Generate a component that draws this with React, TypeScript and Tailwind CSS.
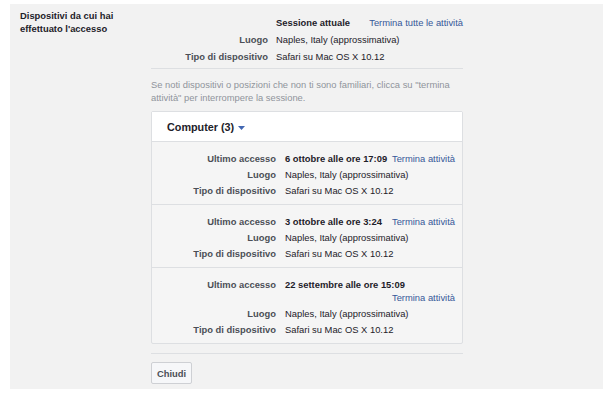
import React from "react";

type Session = {
  date: string;
  place: string;
  device: string;
};

const sessions: Session[] = [
  { date: "6 ottobre alle ore 17:09", place: "Naples, Italy (approssimativa)", device: "Safari su Mac OS X 10.12" },
  { date: "3 ottobre alle ore 3:24", place: "Naples, Italy (approssimativa)", device: "Safari su Mac OS X 10.12" },
  { date: "22 settembre alle ore 15:09", place: "Naples, Italy (approssimativa)", device: "Safari su Mac OS X 10.12" },
];

function Label({ children }: { children: React.ReactNode }) {
  return <div className="text-right font-bold text-[#4b4f56] py-[1.5px]">{children}</div>;
}

function Value({ children }: { children: React.ReactNode }) {
  return <div className="text-[#1d2129] py-[1.5px]">{children}</div>;
}

function App() {
  return (
    <div className="w-[610px] h-[395px] bg-white pt-[4px] pl-[10px] font-['Liberation_Sans',Arial,sans-serif] text-[9.4px] leading-[13px]">
      <div className="flex w-[593px] h-[385px] bg-[#f2f2f2]">
        {/* left title */}
        <div className="w-[141px] pl-[10px] pt-[6px] pr-[10px]">
          <div className="font-bold text-[#1d2129] leading-[12.5px]">
            Dispositivi da cui hai effettuato l'accesso
          </div>
        </div>

        <div className="w-[312px] flex flex-col">
          {/* current session */}
          <div className="grid grid-cols-[117px_1fr] gap-x-2 pt-[10px] pb-[3px] border-b border-[#dddfe2]">
            <div />
            <div className="flex justify-between py-[2px]">
              <span className="font-bold text-[#1d2129]">Sessione attuale</span>
              <a className="text-[#365899]">Termina tutte le attività</a>
            </div>
            <div className="text-right font-bold text-[#4b4f56] py-[2px]">Luogo</div>
            <div className="text-[#1d2129] py-[2px]">Naples, Italy (approssimativa)</div>
            <div className="text-right font-bold text-[#4b4f56] py-[2px]">Tipo di dispositivo</div>
            <div className="text-[#1d2129] py-[2px]">Safari su Mac OS X 10.12</div>
          </div>

          <p className="mt-[9px] text-[#90949c]">
            Se noti dispositivi o posizioni che non ti sono familiari, clicca su "termina attività" per
            interrompere la sessione.
          </p>

          {/* device list */}
          <div className="mt-[7px] border border-[#dddfe2] rounded-[2px] bg-[#f5f5f5]">
            <div className="h-[30px] flex items-center pl-[15px] pt-[1px] bg-white border-b border-[#dddfe2]">
              <span className="font-bold text-[10.8px] text-[#1d2129]">Computer (3)</span>
              <svg className="ml-[4px] mt-[2px]" width="7" height="4" viewBox="0 0 7 4">
                <path d="M0 0h7L3.5 4z" fill="#4267b2" />
              </svg>
            </div>
            {sessions.map((s, i) => (
              <div
                key={i}
                className={`grid grid-cols-[117px_170px] gap-x-[9px] pl-[7px] pt-[8px] pb-[6px] ${
                  i < sessions.length - 1 ? "border-b border-[#dddfe2]" : ""
                }`}
              >
                <Label>Ultimo accesso</Label>
                <div className="flex flex-wrap justify-between py-[1.5px]">
                  <span className="font-bold text-[#1d2129]">{s.date}</span>
                  <a className="ml-auto text-[#365899]">Termina attività</a>
                </div>
                <Label>Luogo</Label>
                <Value>{s.place}</Value>
                <Label>Tipo di dispositivo</Label>
                <Value>{s.device}</Value>
              </div>
            ))}
          </div>

          <div className="mt-[9px] border-t border-[#dddfe2]" />

          <div className="mt-[8px]">
            <button className="h-[22px] px-[5px] bg-[#f6f7f9] border border-[#ced0d4] rounded-[2px] font-bold text-[#4b4f56]">
              Chiudi
            </button>
          </div>
        </div>
      </div>
    </div>
  );
}

export default App;
